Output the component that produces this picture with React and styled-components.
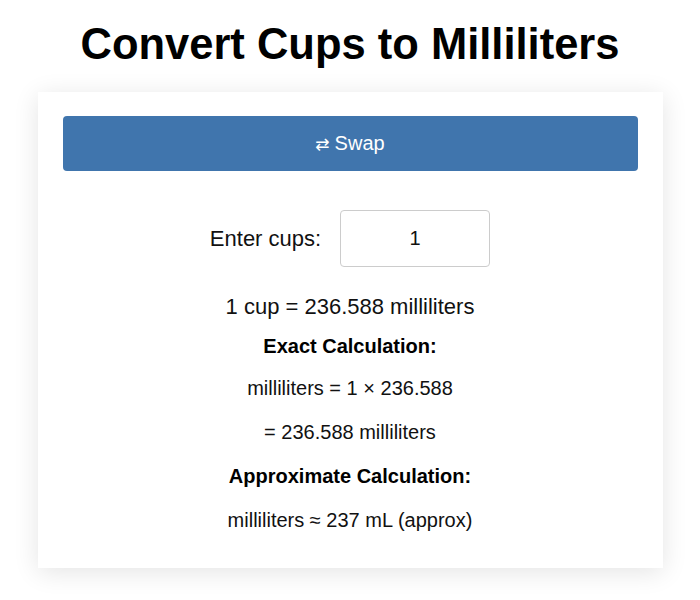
import React, { useState } from "react";
import styled, { createGlobalStyle } from "styled-components";

const Global = createGlobalStyle`
  html, body { margin: 0; padding: 0; background: #ffffff; }
  body { font-family: "Liberation Sans", Arial, sans-serif; color: #111; }
  * { box-sizing: border-box; }
`;

const Page = styled.div`
  display: flex;
  flex-direction: column;
  align-items: center;
  padding: 19px 0 40px;
`;

const Title = styled.h1`
  margin: 0 0 23px;
  font-size: 43.5px;
  line-height: 50px;
  font-weight: 700;
  color: #000;
  text-align: center;
`;

const Card = styled.div`
  width: 625px;
  background: #fff;
  padding: 24px 25px 36px;
  box-shadow: 0 4px 24px rgba(0, 0, 0, 0.11);
  display: flex;
  flex-direction: column;
  align-items: center;
`;

const SwapButton = styled.button`
  width: 100%;
  height: 55px;
  border: none;
  border-radius: 4px;
  background: #4075ad;
  color: #fff;
  font-family: "Liberation Sans", Arial, sans-serif;
  font-size: 20px;
  cursor: pointer;
  display: flex;
  align-items: center;
  justify-content: center;
  gap: 5px;
`;

const Arrows = styled.span`
  font-family: "DejaVu Sans", sans-serif;
  font-size: 17px;
`;

const InputRow = styled.div`
  margin-top: 39px;
  display: flex;
  align-items: center;
  justify-content: center;
  gap: 19px;
`;

const Label = styled.label`
  font-size: 22px;
  color: #111;
`;

const NumberInput = styled.input`
  width: 150px;
  height: 57px;
  border: 1px solid #ccc;
  border-radius: 4px;
  font-family: "Liberation Sans", Arial, sans-serif;
  font-size: 20px;
  text-align: center;
  color: #111;
  outline: none;
`;

const Result = styled.div`
  margin-top: 27px;
  font-size: 22px;
  line-height: 26px;
  text-align: center;
`;

const Line = styled.p`
  margin: ${(p) => p.$top}px 0 0;
  font-size: 20px;
  line-height: 24px;
  font-weight: ${(p) => (p.$bold ? 700 : 400)};
  text-align: center;
  color: ${(p) => (p.$bold ? "#000" : "#111")};
`;

export default function App() {
  const [cups, setCups] = useState("1");
  const n = parseFloat(cups) || 0;
  const ml = +(n * 236.588).toFixed(3);
  return (
    <>
      <Global />
      <Page>
        <Title>Convert Cups to Milliliters</Title>
        <Card>
          <SwapButton>
            <Arrows>⇄</Arrows>
            <span>Swap</span>
          </SwapButton>
          <InputRow>
            <Label htmlFor="cups">Enter cups:</Label>
            <NumberInput
              id="cups"
              value={cups}
              onChange={(e) => setCups(e.target.value)}
            />
          </InputRow>
          <Result>
            {cups} cup = {ml} milliliters
          </Result>
          <Line $bold $top={14}>Exact Calculation:</Line>
          <Line $top={18}>milliliters = {cups} × 236.588</Line>
          <Line $top={20}>= {ml} milliliters</Line>
          <Line $bold $top={20}>Approximate Calculation:</Line>
          <Line $top={20}>milliliters ≈ {Math.round(ml)} mL (approx)</Line>
        </Card>
      </Page>
    </>
  );
}
